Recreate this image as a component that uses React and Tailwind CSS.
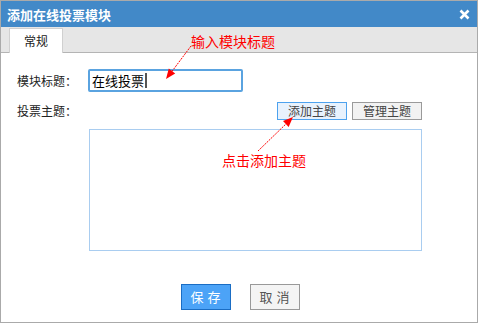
import { useState } from 'react';

const cjk = { fontFamily: '"Noto Sans CJK SC", "Liberation Sans", sans-serif' };

function Arrows() {
  return (
    <svg className="absolute inset-0 pointer-events-none" width="478" height="323">
      <line x1="190" y1="45" x2="169" y2="73" stroke="#ff0000" strokeWidth="1" strokeDasharray="2 1" />
      <polygon points="165,78 174.2,72.4 167.8,67.6" fill="#ff0000" />
      <line x1="257" y1="150" x2="287" y2="121" stroke="#ff0000" strokeWidth="1" strokeDasharray="2 1" />
      <polygon points="292,116 287.6,125.9 282,120.1" fill="#ff0000" />
    </svg>
  );
}

export default function App() {
  const [title] = useState('在线投票');

  return (
    <div
      className="relative w-[478px] h-[323px] bg-white border border-[#aaaaaa] flex flex-col overflow-hidden"
      style={cjk}
    >
      {/* Title bar */}
      <div className="h-[26px] bg-[#4289c8] flex items-center justify-between pl-[6px] pr-[7px]">
        <span className="text-white font-bold text-[13px] leading-none">添加在线投票模块</span>
        <svg width="11" height="11" viewBox="0 0 11 11">
          <path d="M1.5 1.5 L9.5 9.5 M9.5 1.5 L1.5 9.5" stroke="#fff" strokeWidth="2.6" />
        </svg>
      </div>

      {/* Tabs */}
      <div className="h-[26px] bg-[#e6e6e6] border-b border-[#b4b4b4] flex items-end pl-[8px]">
        <div className="w-[54px] h-[25px] -mb-px bg-white border border-b-0 border-[#d0d0d0] flex items-center justify-center text-[12px] text-[#222]">
          常规
        </div>
      </div>

      {/* Body */}
      <div className="flex flex-col pl-[16px]">
        <div className="flex items-center mt-[16px]">
          <span className="w-[71px] text-[12px] text-[#222]">模块标题：</span>
          <div className="w-[155px] h-[23px] border-2 border-[#5aa3e0] rounded-[2px] flex items-center pl-[2px] text-[13px] text-black">
            {title}
            <span className="w-[2px] h-[15px] bg-[#555] ml-px" />
          </div>
        </div>

        <div className="flex items-center mt-[10px] w-[405px]">
          <span className="text-[12px] text-[#222]">投票主题：</span>
          <div className="ml-auto flex gap-[5px]">
            <button className="w-[70px] h-[18px] bg-[#e8f2fd] border border-[#4da2ee] text-[12px] text-[#444] leading-none flex items-center justify-center">
              添加主题
            </button>
            <button className="w-[70px] h-[18px] bg-[#f2f2f2] border border-[#9a9a9a] text-[12px] text-[#444] leading-none flex items-center justify-center">
              管理主题
            </button>
          </div>
        </div>

        <div className="ml-[72px] mt-[9px] w-[333px] h-[122px] border border-[#a9cdf0]" />
      </div>

      {/* Footer */}
      <div className="flex justify-center gap-[19px] mt-[33px] pl-[2px]">
        <button className="w-[50px] h-[26px] bg-[#4ca3f7] border border-[#1a6dc4] text-white text-[13px] tracking-[4px] pl-[4px] flex items-center justify-center">
          保存
        </button>
        <button className="w-[50px] h-[26px] bg-[#f4f4f4] border border-[#999999] text-[#555] text-[13px] tracking-[4px] pl-[4px] flex items-center justify-center">
          取消
        </button>
      </div>

      {/* Annotations */}
      <span className="absolute left-[190px] top-[33px] text-[14px] leading-none text-[#ff0000]">输入模块标题</span>
      <span className="absolute left-[221px] top-[152px] text-[14px] leading-none text-[#ff0000]">点击添加主题</span>
      <Arrows />
    </div>
  );
}
